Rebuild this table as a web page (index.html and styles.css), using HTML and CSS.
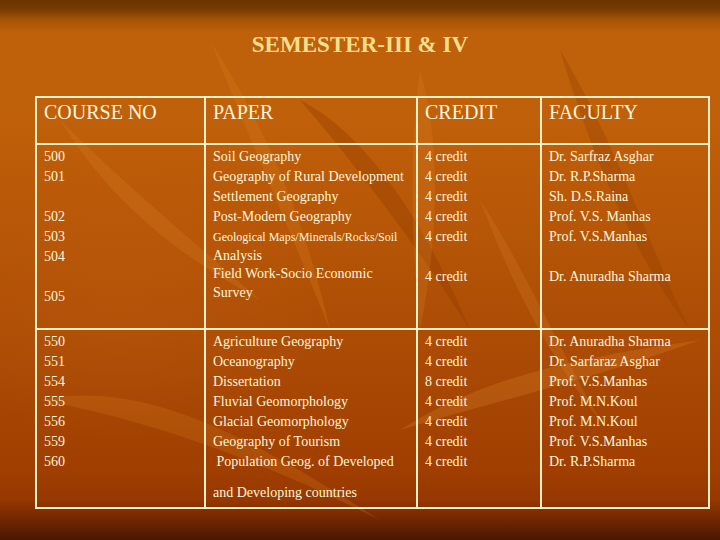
FILE: index.html
```html
<!DOCTYPE html>
<html>
<head>
<meta charset="utf-8">
<link rel="stylesheet" href="styles.css">
</head>
<body>
<div class="slide">
  <svg class="deco" width="720" height="540" viewBox="0 0 720 540">
    <path d="M210 40 C 260 120 300 200 330 330 C 290 230 250 140 210 40 Z" fill="#d57a1c" opacity="0.3"/>
    <path d="M300 100 C 360 130 420 210 470 330 C 420 250 360 170 300 100 Z" fill="#8f3a00" opacity="0.35"/>
    <path d="M60 120 C 120 180 180 230 260 300 C 170 250 110 200 60 120 Z" fill="#e08a30" opacity="0.2"/>
    <path d="M420 70 C 440 140 440 230 420 330 C 410 230 410 140 420 70 Z" fill="#e08a30" opacity="0.2"/>
    <path d="M560 50 C 620 150 650 250 690 330 C 630 250 590 150 560 50 Z" fill="#8f3a00" opacity="0.3"/>
    <path d="M40 400 C 140 380 240 430 380 520 C 260 460 150 420 40 400 Z" fill="#d57a1c" opacity="0.25"/>
    <path d="M400 430 C 480 380 560 360 700 340 C 590 380 500 400 400 430 Z" fill="#e08a30" opacity="0.25"/>
    <path d="M480 200 C 520 260 560 350 600 420 C 550 360 510 280 480 200 Z" fill="#e08a30" opacity="0.2"/>
  </svg>
  <h1 class="title">SEMESTER-III &amp; IV</h1>
  <table class="grid">
    <colgroup>
      <col class="c1"><col class="c2"><col class="c3"><col class="c4">
    </colgroup>
    <tr class="head">
      <td>COURSE NO</td><td>PAPER</td><td>CREDIT</td><td>FACULTY</td>
    </tr>
    <tr class="r1">
      <td>
        <div class="ln">500</div><div class="ln">501</div><div class="ln"></div><div class="ln">502</div><div class="ln">503</div><div class="ln">504</div><div class="ln"></div><div class="ln">505</div>
      </td>
      <td>
        <div class="ln">Soil Geography</div>
        <div class="ln">Geography of Rural Development</div>
        <div class="ln">Settlement Geography</div>
        <div class="ln">Post-Modern Geography</div>
        <div class="ln small">Geological Maps/Minerals/Rocks/Soil</div>
        <div class="ln tight">Analysis</div>
        <div class="ln">Field Work-Socio Economic</div>
        <div class="ln tight">Survey</div>
      </td>
      <td>
        <div class="ln">4 credit</div><div class="ln">4 credit</div><div class="ln">4 credit</div><div class="ln">4 credit</div><div class="ln">4 credit</div><div class="ln"></div><div class="ln">4 credit</div>
      </td>
      <td>
        <div class="ln">Dr. Sarfraz Asghar</div><div class="ln">Dr. R.P.Sharma</div><div class="ln">Sh. D.S.Raina</div><div class="ln">Prof. V.S. Manhas</div><div class="ln">Prof. V.S.Manhas</div><div class="ln"></div><div class="ln">Dr. Anuradha Sharma</div>
      </td>
    </tr>
    <tr class="r2">
      <td>
        <div class="ln">550</div><div class="ln">551</div><div class="ln">554</div><div class="ln">555</div><div class="ln">556</div><div class="ln">559</div><div class="ln">560</div>
      </td>
      <td>
        <div class="ln">Agriculture Geography</div>
        <div class="ln">Oceanography</div>
        <div class="ln">Dissertation</div>
        <div class="ln">Fluvial Geomorphology</div>
        <div class="ln">Glacial Geomorphology</div>
        <div class="ln">Geography of Tourism</div>
        <div class="ln">&nbsp;Population Geog. of Developed</div>
        <div class="gap"></div>
        <div class="ln">and Developing countries</div>
      </td>
      <td>
        <div class="ln">4 credit</div><div class="ln">4 credit</div><div class="ln">8 credit</div><div class="ln">4 credit</div><div class="ln">4 credit</div><div class="ln">4 credit</div><div class="ln">4 credit</div>
      </td>
      <td>
        <div class="ln">Dr. Anuradha Sharma</div><div class="ln">Dr. Sarfaraz Asghar</div><div class="ln">Prof. V.S.Manhas</div><div class="ln">Prof. M.N.Koul</div><div class="ln">Prof. M.N.Koul</div><div class="ln">Prof. V.S.Manhas</div><div class="ln">Dr. R.P.Sharma</div>
      </td>
    </tr>
  </table>
</div>
</body>
</html>
```
FILE: styles.css
```css
html, body {
  margin: 0;
  padding: 0;
}
body {
  width: 720px;
  height: 540px;
  overflow: hidden;
  font-family: "Liberation Serif", serif;
}
.slide {
  position: relative;
  width: 720px;
  height: 540px;
  overflow: hidden;
  background:
    radial-gradient(ellipse 300px 200px at 120px 300px, rgba(200,100,20,0.25), rgba(200,100,20,0) 70%),
    linear-gradient(to bottom,
      #6a3300 0px,
      #7a3c00 10px,
      #a55404 20px,
      #bf600a 32px,
      #c0600a 120px,
      #b45406 250px,
      #a84804 380px,
      #a03e00 470px,
      #963800 500px,
      #742800 518px,
      #4a1800 540px);
  display: flex;
  flex-direction: column;
  align-items: flex-start;
}
.deco {
  position: absolute;
  left: 0;
  top: 0;
  z-index: 0;
}
.title {
  position: relative;
  z-index: 1;
  align-self: stretch;
  margin: 31px 0 0 0;
  height: 26px;
  line-height: 26px;
  text-align: center;
  font-family: "Liberation Serif", serif;
  font-size: 24px;
  font-weight: bold;
  transform: scaleX(0.96);
  color: #f6df8c;
}
.grid {
  position: relative;
  z-index: 1;
  margin: 39px 0 0 35px;
  border-collapse: collapse;
  table-layout: fixed;
  width: 673px;
  color: #fff5dc;
  font-family: "Liberation Serif", serif;
}
.c1 { width: 169px; }
.c2 { width: 212px; }
.c3 { width: 124px; }
.c4 { width: 168px; }
.grid td {
  border: 2px solid #fff0c8;
  vertical-align: top;
  padding: 2px 0 0 7px;
  font-size: 14px;
}
.head td {
  height: 43px;
  font-size: 20px;
  line-height: 24px;
  padding-top: 2px;
}
.r1 td {
  height: 181px;
}
.r2 td {
  height: 175px;
}
.ln {
  height: 20px;
  line-height: 20px;
  white-space: nowrap;
}
.small {
  font-size: 12px;
}
.tight {
  height: 17px;
  line-height: 17px;
}
.gap {
  height: 11px;
}
```
